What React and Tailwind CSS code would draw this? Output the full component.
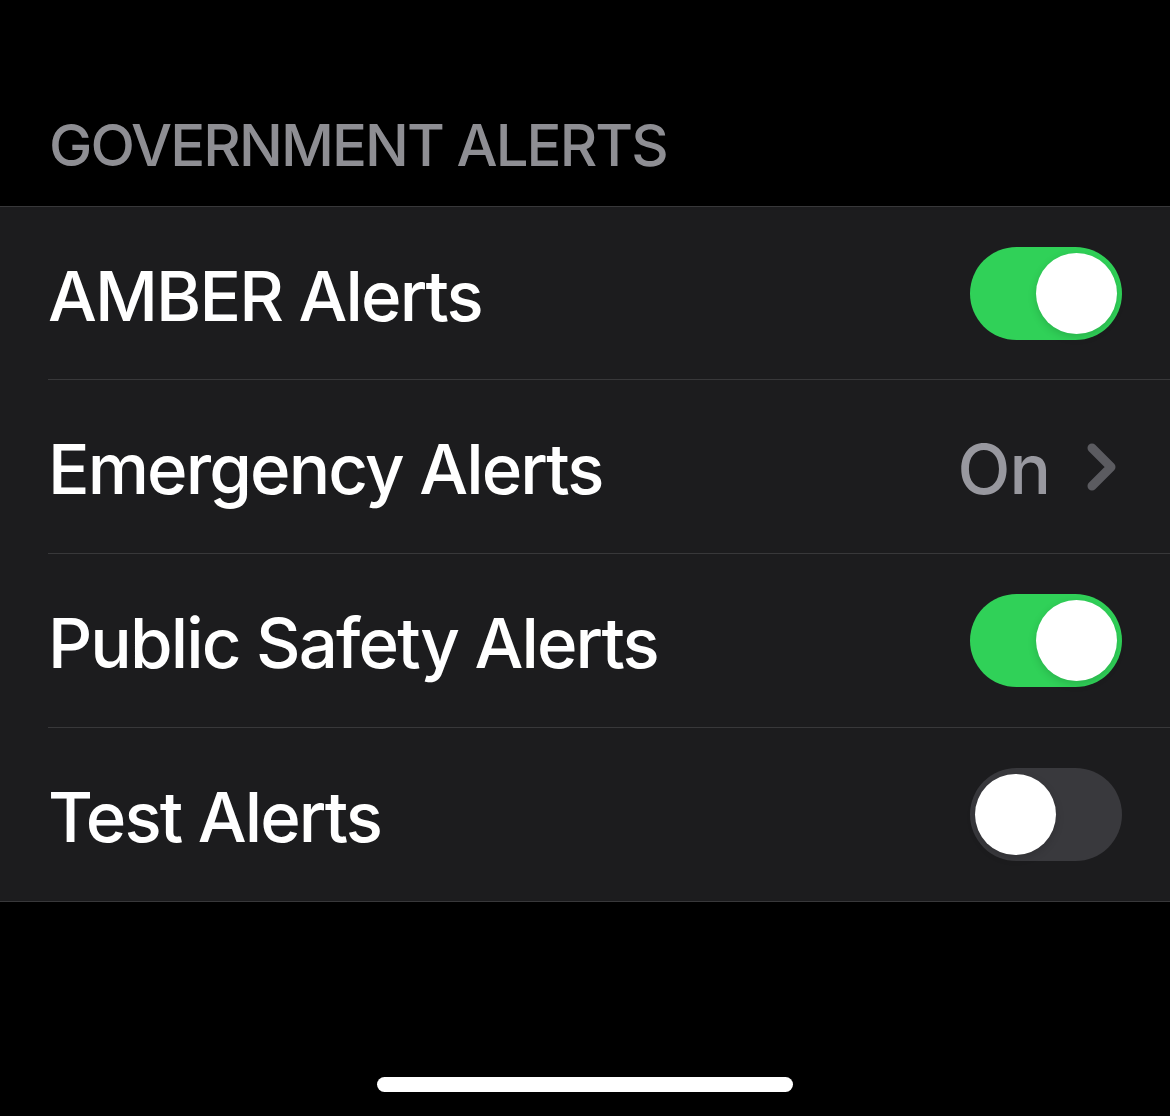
import React from "react";

const font = { fontFamily: "Inter, 'Noto Sans', sans-serif" };

function Toggle({ on }) {
  return (
    <div
      className={`relative flex h-[93px] w-[152px] shrink-0 items-center rounded-full px-[5px] ${
        on ? "justify-end bg-[#30d158]" : "justify-start bg-[#39393d]"
      }`}
    >
      <div className="h-[81px] w-[81px] rounded-full bg-white shadow-[0_3px_8px_rgba(0,0,0,0.15)]" />
    </div>
  );
}

function Row({ label, children, last, short }) {
  return (
    <div className={`flex flex-col pl-[48px] ${short ? "h-[173px]" : "h-[174px]"}`}>
      <div className="flex flex-1 items-center justify-between pr-[48px]">
        <span className="pt-[6px] text-[69px] font-medium leading-none tracking-[-1.9px] text-white">
          {label}
        </span>
        {children}
      </div>
      {!last && <div className="h-px bg-[#38383a]" />}
    </div>
  );
}

export default function App() {
  return (
    <div className="flex h-[1116px] w-full flex-col bg-black" style={font}>
      <div className="flex h-[206px] items-end px-[49px] pb-[25px]">
        <span className="text-[58px] font-medium leading-[72px] tracking-[-1.9px] text-[#8e8e93]">
          GOVERNMENT ALERTS
        </span>
      </div>
      <div className="border-y border-[#38383a] bg-[#1c1c1e]">
        <Row label="AMBER Alerts" short>
          <Toggle on />
        </Row>
        <Row label="Emergency Alerts">
          <div className="flex items-center gap-[36px]">
            <span className="pt-[6px] text-[69px] font-medium leading-none tracking-[-1px] text-[#98989f]">On</span>
            <svg width="32" height="50" viewBox="0 0 32 50" fill="none" className="mr-[4px]">
              <path
                d="M6 6 L25 25 L6 44"
                stroke="#5b5b60"
                strokeWidth="9"
                strokeLinecap="round"
                strokeLinejoin="round"
              />
            </svg>
          </div>
        </Row>
        <Row label="Public Safety Alerts">
          <Toggle on />
        </Row>
        <Row label="Test Alerts" last short>
          <Toggle on={false} />
        </Row>
      </div>
      <div className="flex flex-1 items-end justify-center pb-[24px]">
        <div className="h-[15px] w-[416px] rounded-full bg-white" />
      </div>
    </div>
  );
}
